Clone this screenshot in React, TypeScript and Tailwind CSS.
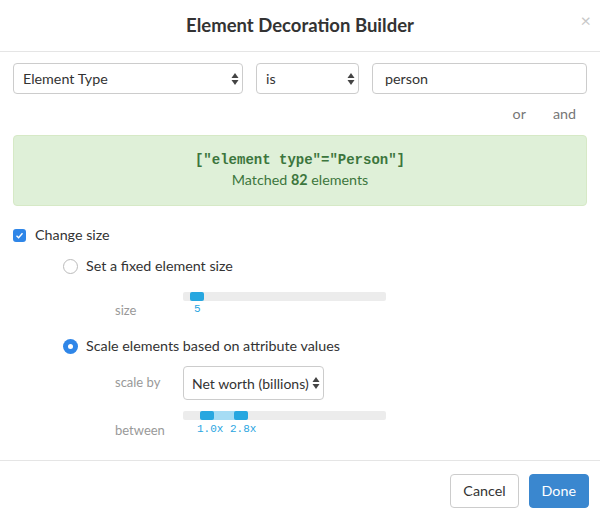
import React from "react";

const Arrows = () => (
  <svg width="8" height="14" viewBox="0 0 8 14" className="shrink-0">
    <path d="M4 1 L7.5 6 H0.5 Z" fill="#444" />
    <path d="M4 13 L7.5 8 H0.5 Z" fill="#444" />
  </svg>
);

export default function App() {
  return (
    <div className="w-[600px] h-[520px] bg-white flex flex-col text-[#333]" style={{ fontFamily: "Lato, 'Open Sans', sans-serif" }}>
      <div className="h-[52px] relative flex items-center justify-center border-b border-[#e5e5e5] shrink-0">
        <div className="text-[18.5px] font-bold text-[#333]">Element Decoration Builder</div>
        <div className="absolute right-[9px] top-[11px] text-[#c8c8c8] text-[18px] leading-none">×</div>
      </div>
      <div className="flex-1 px-[13px] pt-[11px] flex flex-col text-[14.3px]">
        <div className="flex gap-[13px] h-[31px]">
          <div className="w-[230px] border border-[#ccc] rounded-[4px] flex items-center justify-between pl-[9px] pr-[3px]">
            <span>Element Type</span>
            <Arrows />
          </div>
          <div className="w-[103px] border border-[#ccc] rounded-[4px] flex items-center justify-between pl-[9px] pr-[3px]">
            <span>is</span>
            <Arrows />
          </div>
          <div className="flex-1 border border-[#ccc] rounded-[4px] flex items-center pl-[12px]">
            <span>person</span>
          </div>
        </div>
        <div className="flex justify-end gap-[27px] pr-[11px] mt-[12px] text-[#777] h-[16px] leading-[16px]">
          <span>or</span>
          <span>and</span>
        </div>
        <div className="mt-[13px] h-[71px] bg-[#dff0d8] border border-[#d6e9c6] rounded-[4px] flex flex-col items-center justify-center text-[#3c763d] pb-[2px]">
          <div className="font-bold text-[14px] leading-[20px]" style={{ fontFamily: "'Liberation Mono', monospace" }}>["element type"="Person"]</div>
          <div className="leading-[20px]">Matched <b>82</b> elements</div>
        </div>
        <div className="mt-[22px] flex items-center gap-[9px] h-[14px]">
          <div className="w-[13px] h-[13px] rounded-[3px] bg-[#2f86e8] flex items-center justify-center">
            <svg width="9" height="9" viewBox="0 0 9 9"><path d="M1.5 4.8 L3.6 6.8 L7.5 2.2" stroke="white" strokeWidth="1.4" fill="none" /></svg>
          </div>
          <span>Change size</span>
        </div>
        <div className="ml-[50px] mt-[16px] flex items-center gap-[8px] h-[16px]">
          <div className="w-[15px] h-[15px] rounded-full border border-[#bbb] bg-white" />
          <span>Set a fixed element size</span>
        </div>
        <div className="mt-[18px] flex">
          <div className="w-[170px] pl-[102px] pt-[10px] text-[13px] text-[#999] leading-[16px]">size</div>
          <div className="w-[203px]">
            <div className="h-[9px] bg-[#ececec] rounded-[2px] relative">
              <div className="absolute left-[7px] top-0 w-[14px] h-[9px] rounded-[2px] bg-[#27a7e0]" />
            </div>
            <div className="pl-[11px] text-[11px] text-[#2aa5df] leading-[14px] mt-[1px]" style={{ fontFamily: "'Liberation Mono', monospace" }}>5</div>
          </div>
        </div>
        <div className="ml-[50px] mt-[20px] flex items-center gap-[8px] h-[16px]">
          <div className="w-[15px] h-[15px] rounded-full bg-[#2f86e8] flex items-center justify-center">
            <div className="w-[5px] h-[5px] rounded-full bg-white" />
          </div>
          <span>Scale elements based on attribute values</span>
        </div>
        <div className="mt-[12px] flex items-center">
          <div className="w-[170px] pl-[102px] text-[13px] text-[#999]">scale by</div>
          <div className="w-[141px] h-[34px] border border-[#ccc] rounded-[4px] flex items-center justify-between pl-[8px] pr-[3px] text-[14px]">
            <span>Net worth (billions)</span>
            <Arrows />
          </div>
        </div>
        <div className="mt-[11px] flex">
          <div className="w-[170px] pl-[102px] pt-[11px] text-[13px] text-[#999] leading-[16px]">between</div>
          <div className="w-[203px]">
            <div className="h-[9px] bg-[#ececec] rounded-[2px] relative">
              <div className="absolute left-[24px] top-0 w-[40px] h-[9px] bg-[#a6dcf4]" />
              <div className="absolute left-[17px] top-0 w-[14px] h-[9px] rounded-[2px] bg-[#27a7e0]" />
              <div className="absolute left-[51px] top-0 w-[14px] h-[9px] rounded-[2px] bg-[#27a7e0]" />
            </div>
            <div className="pl-[14px] text-[11px] text-[#2aa5df] leading-[14px] mt-[2px]" style={{ fontFamily: "'Liberation Mono', monospace" }}>1.0x 2.8x</div>
          </div>
        </div>
      </div>
      <div className="h-[60px] border-t border-[#e5e5e5] flex items-center justify-end gap-[10px] pr-[11px] shrink-0">
        <div className="h-[34px] px-[12px] border border-[#ccc] rounded-[4px] flex items-center text-[14.3px]">Cancel</div>
        <div className="h-[34px] px-[12px] bg-[#3a87cf] border border-[#3a87cf] rounded-[4px] flex items-center text-[14.3px] text-white">Done</div>
      </div>
    </div>
  );
}
